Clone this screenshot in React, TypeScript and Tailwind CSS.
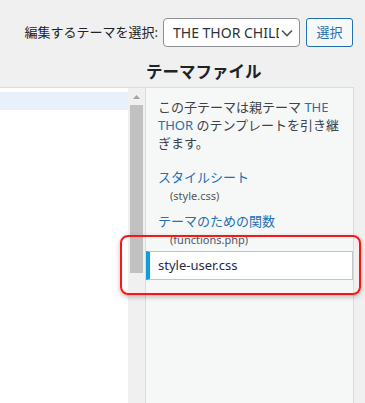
export default function App() {
  const font = { fontFamily: '"Noto Sans", "Noto Sans CJK JP", sans-serif' };

  return (
    <div className="relative h-[403px] w-[365px] overflow-hidden bg-[#f0f0f1] text-[#1d2327]" style={font}>
      {/* theme picker */}
      <div className="flex items-center justify-end pt-[18px] pr-[12px]">
        <label className="mr-[5px] text-[13px] leading-[29px] whitespace-nowrap">編集するテーマを選択:</label>
        <div className="flex h-[29px] w-[137px] items-center rounded-[4px] border border-[#8c8f94] bg-white pl-[9px] pr-[6px]">
          <span className="w-[106px] overflow-hidden whitespace-nowrap text-[14px] text-[#2c3338]">THE THOR CHILD</span>
          <svg className="ml-auto" width="12" height="8" viewBox="0 0 12 8">
            <path d="M1 1.5l5 5 5-5" fill="none" stroke="#50575e" strokeWidth="1.6" />
          </svg>
        </div>
        <button className="ml-[6px] h-[29px] w-[47px] rounded-[3px] border border-[#2271b1] bg-[#f6f7f7] text-[13px] text-[#2271b1]">
          選択
        </button>
      </div>

      <div className="flex items-start">
        {/* code editor */}
        <div className="mt-[40px] flex h-[320px] flex-1 border-t border-[#dcdcde]">
          <div className="flex-1 bg-white pt-[4px]">
            <div className="h-[18px] bg-[#e8f1fb]" />
          </div>
          <div className="flex w-[17px] flex-col items-center bg-[#f0f0f0]">
            <svg className="mt-[7px]" width="7" height="4" viewBox="0 0 7 4">
              <path d="M3.5 0L7 4H0z" fill="#a3a3a3" />
            </svg>
            <div className="mt-[6px] h-[168px] w-[13px] bg-[#c1c1c1]" />
          </div>
        </div>

        {/* file list */}
        <div className="mr-[11px] w-[209px]">
          <h2 className="mt-[14px] mb-[4px] pl-[1px] text-[16.5px] font-bold leading-[22px] text-[#1d2327]">テーマファイル</h2>
          <div className="h-[330px] border border-[#dcdcde] bg-[#f6f7f7]">
            <p className="pt-[10px] pl-[12px] text-[13px] leading-[18px] whitespace-nowrap text-[#3c434a]">
              この子テーマは親テーマ <span className="text-[#2271b1]">THE</span>
              <br />
              <span className="text-[#2271b1]">THOR</span> のテンプレートを引き継
              <br />
              ぎます。
            </p>
            <ul className="mt-[16px]">
              <li className="pl-[12px]">
                <div className="text-[13px] leading-[18px] text-[#2271b1]">スタイルシート</div>
                <div className="pl-[12px] pt-[2px] text-[11px] leading-[16px] text-[#50575e]">(style.css)</div>
              </li>
              <li className="mt-[8px] pl-[12px]">
                <div className="text-[13px] leading-[18px] text-[#2271b1]">テーマのための関数</div>
                <div className="pl-[12px] pt-[2px] text-[11px] leading-[16px] text-[#50575e]">(functions.php)</div>
              </li>
              <li className="mt-[3px] flex h-[29px] items-center border border-l-4 border-[#c3c4c7] border-l-[#0b9fd7] bg-white pl-[8px]">
                <span className="text-[13px] text-[#1d2b4a]">style-user.css</span>
              </li>
            </ul>
          </div>
        </div>
      </div>

      {/* red highlight annotation */}
      <div className="absolute left-[120px] top-[235px] h-[60px] w-[241px] rounded-[8px] border-2 border-[#ff1414] shadow-[0_2px_5px_rgba(0,0,0,0.25)]" />
    </div>
  );
}
